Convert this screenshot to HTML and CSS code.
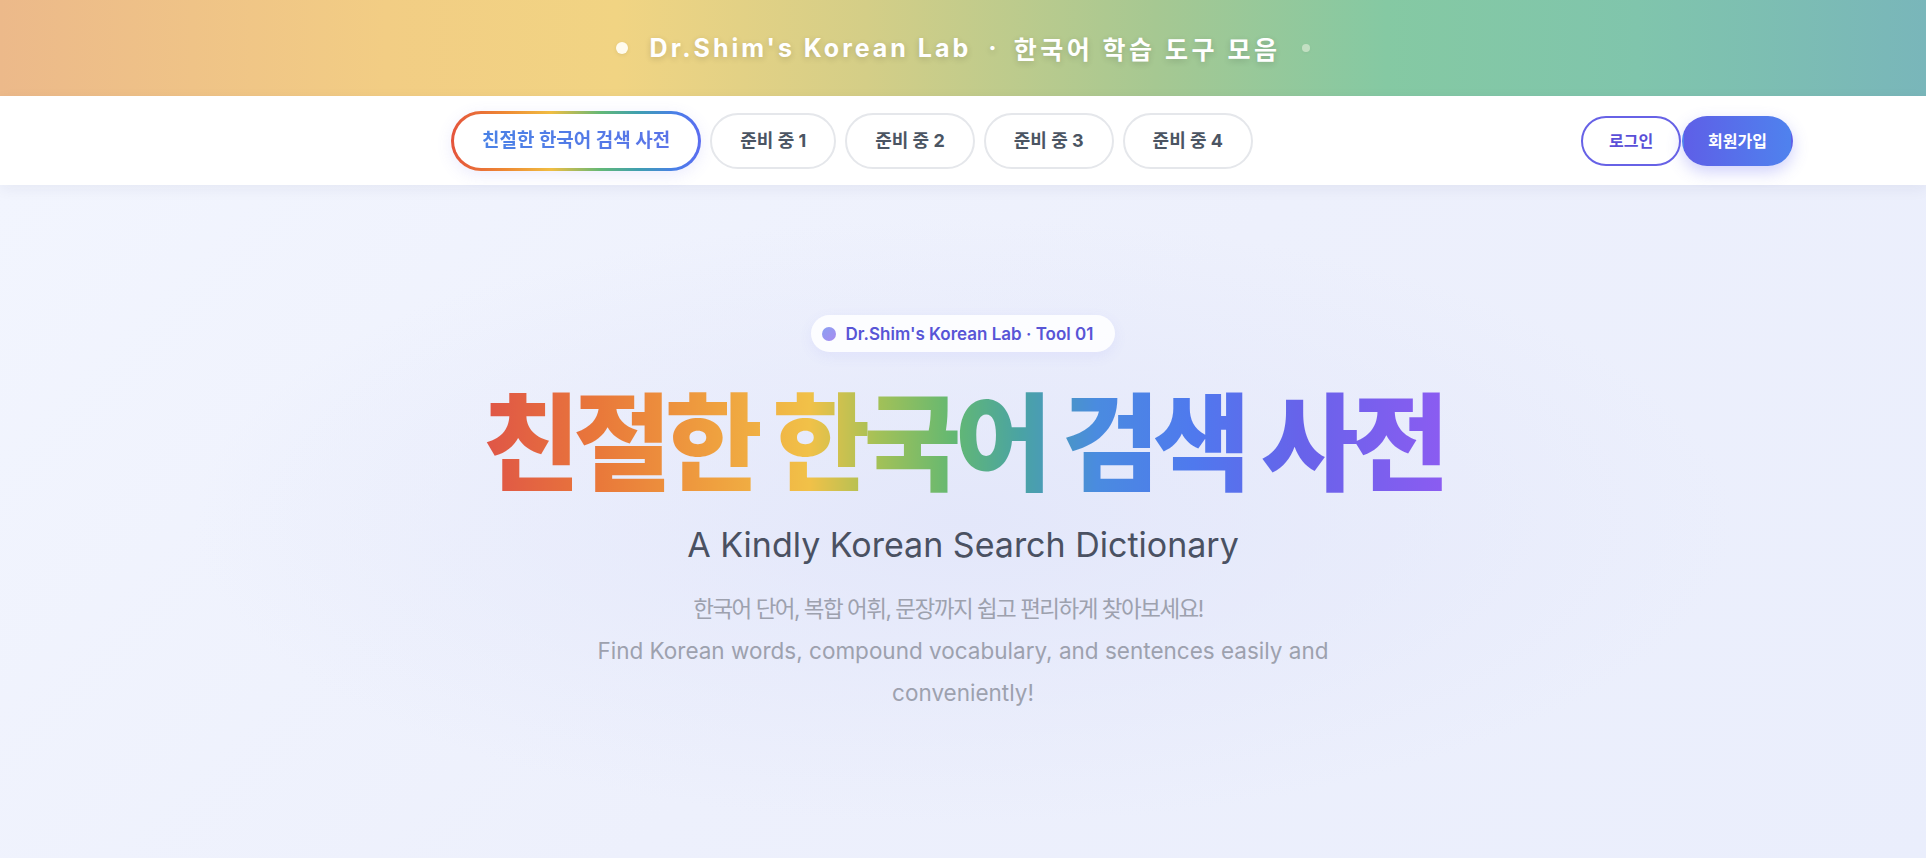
FILE: index.html
```html
<!DOCTYPE html>
<html lang="ko">
<head>
    <meta charset="UTF-8">
    <meta name="viewport" content="width=device-width, initial-scale=1.0">
    <title>친절한 한국어 검색 사전</title>
    <link rel="stylesheet" href="styles.css">
</head>
<body>
    <header class="topbar">
        <span class="topbar-dot"></span>
        <span class="topbar-title">
            <span class="topbar-en">Dr.Shim's Korean Lab</span>
            <span class="topbar-sep">·</span>
            <span class="topbar-ko">한국어 학습 도구 모음</span>
        </span>
        <span class="topbar-dot faded"></span>
    </header>

    <nav class="mainnav">
        <div class="tabs">
            <a class="tab active" href="#"><span class="tab-label">친절한 한국어 검색 사전</span></a>
            <a class="tab" href="#">준비 중 1</a>
            <a class="tab" href="#">준비 중 2</a>
            <a class="tab" href="#">준비 중 3</a>
            <a class="tab" href="#">준비 중 4</a>
        </div>
        <div class="auth">
            <button class="btn-login">로그인</button>
            <button class="btn-signup">회원가입</button>
        </div>
    </nav>

    <main class="hero">
        <div class="badge">
            <span class="badge-dot"></span>
            Dr.Shim's Korean Lab · Tool 01
        </div>
        <h1 class="hero-title">친절한 한국어 검색 사전</h1>
        <p class="hero-sub">A Kindly Korean Search Dictionary</p>
        <p class="hero-desc">
            <span class="desc-ko">한국어 단어, 복합 어휘, 문장까지 쉽고 편리하게 찾아보세요!</span><br>
            Find Korean words, compound vocabulary, and sentences easily and conveniently!
        </p>
    </main>
</body>
</html>
```

FILE: styles.css
```css
* {
    box-sizing: border-box;
}
body {
    margin: 0;
    font-family: "Inter", "Noto Sans CJK KR", sans-serif;
    background-color: #eef1fc;
    min-height: 100vh;
}

/* top banner */
.topbar {
    height: 96px;
    display: flex;
    align-items: center;
    justify-content: center;
    gap: 22px;
    background: linear-gradient(90deg, #ecb98a 0%, #f2cd84 20%, #f1d483 32%, #d4ce87 45%, #a6c892 60%, #85c9a3 72%, #80c5ac 85%, #79b6ba 100%);
    color: #fff;
}
.topbar-title {
    font-size: 25px;
    font-weight: 700;
    letter-spacing: 3px;
    text-shadow: 0 2px 6px rgba(0, 0, 0, 0.16);
    display: flex;
    align-items: center;
    gap: 17px;
}
.topbar-sep {
    letter-spacing: 0;
}
.topbar-ko {
    letter-spacing: 3.5px;
}
.topbar-dot {
    width: 12px;
    height: 12px;
    border-radius: 50%;
    background-color: #fffbef;
    box-shadow: 0 1px 4px rgba(0, 0, 0, 0.08);
}
.topbar-dot.faded {
    width: 8px;
    height: 8px;
    opacity: 0.45;
}

/* navigation */
.mainnav {
    height: 89px;
    background-color: #fff;
    display: flex;
    align-items: center;
    padding: 0 133px;
    gap: 10px;
    box-shadow: 0 4px 14px rgba(30, 40, 90, 0.06);
    position: relative;
}
.tabs {
    flex: 1;
    display: flex;
    justify-content: center;
    align-items: center;
    gap: 9px;
}
.tab {
    display: inline-block;
    text-decoration: none;
    font-size: 18px;
    font-weight: 700;
    line-height: 24px;
    color: #4b5563;
    padding: 14px 28px;
    border: 2px solid #e5e7eb;
    border-radius: 999px;
    background-color: #fff;
}
.tab.active {
    font-size: 19px;
    line-height: 26px;
    padding: 14px 28px;
    border: 3px solid transparent;
    background: linear-gradient(#fff, #fff) padding-box,
        linear-gradient(90deg, #e4533c 0%, #ee8a33 22%, #f0bd42 40%, #62b877 60%, #3f9fb0 75%, #4a7ee9 90%, #5b6cf0 100%) border-box;
    box-shadow: 0 4px 16px rgba(99, 102, 241, 0.12);
}
.tab-label {
    background: linear-gradient(90deg, #4a82e6, #5b74e8);
    -webkit-background-clip: text;
    background-clip: text;
    color: transparent;
}
.auth {
    display: flex;
    align-items: center;
    gap: 1px;
}
.auth button {
    font-family: inherit;
    font-size: 16px;
    font-weight: 700;
    line-height: 22px;
    padding: 12px 26px;
    border-radius: 999px;
    cursor: pointer;
}
.btn-login {
    background-color: #fff;
    border: 2px solid #6762e6;
    color: #5a4fd8;
}
.btn-signup {
    border: 2px solid transparent;
    background: linear-gradient(90deg, #5e5fe7, #4f82ee);
    color: #fff;
    box-shadow: 0 6px 16px rgba(99, 102, 241, 0.3);
}
.auth .btn-signup {
    padding: 12px 24px;
}

/* hero */
.hero {
    min-height: calc(100vh - 185px);
    padding-top: 130px;
    display: flex;
    flex-direction: column;
    align-items: center;
    text-align: center;
    background: radial-gradient(ellipse 40% 45% at 50% 50%, rgba(226, 230, 250, 0.9), rgba(226, 230, 250, 0) 100%),
        linear-gradient(135deg, #f2f5fe 0%, #edf0fc 50%, #eaeefc 100%);
}
.badge {
    display: flex;
    align-items: center;
    gap: 10px;
    height: 37px;
    padding: 0 22px 0 11px;
    border-radius: 999px;
    background-color: rgba(255, 255, 255, 0.85);
    box-shadow: 0 4px 14px rgba(99, 102, 241, 0.08);
    font-size: 17px;
    font-weight: 600;
    color: #5855d6;
}
.badge-dot {
    width: 14px;
    height: 14px;
    border-radius: 50%;
    background: linear-gradient(135deg, #8aa0f2, #a88cf0);
}
.hero-title {
    margin: 31px 0 0;
    font-size: 106px;
    font-weight: 800;
    line-height: 1.15;
    letter-spacing: -6.5px;
    background: linear-gradient(90deg, #df5547 0%, #e9783a 12%, #efa03f 24%, #f1c148 34%, #a4c157 41%, #63b872 49%, #4aa3a4 56%, #4a8be0 64%, #4f79ee 74%, #6763ea 85%, #8b5cf1 100%);
    -webkit-background-clip: text;
    background-clip: text;
    color: transparent;
}
.hero-sub {
    margin: 16px 0 0;
    font-size: 34px;
    font-weight: 400;
    line-height: 1.4;
    color: #4a5162;
}
.hero-desc {
    margin: 20px 0 0;
    max-width: 780px;
    font-size: 22.5px;
    line-height: 42px;
    color: #9da1ae;
}
.desc-ko {
    display: inline-block;
    letter-spacing: -1.5px;
    padding-right: 30px;
}
```
